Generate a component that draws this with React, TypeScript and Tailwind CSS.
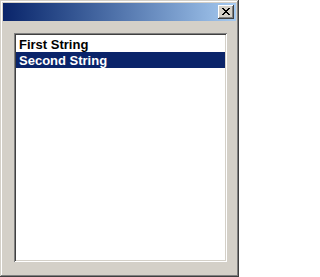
import React from 'react';

const items = ['First String', 'Second String'];

const App: React.FC = () => {
  const selected = 1;

  return (
    <div
      className="w-[239px] h-[277px] bg-[#d4d0c8] p-[3px] flex flex-col shadow-[inset_-1px_-1px_#404040,inset_1px_1px_#d4d0c8,inset_-2px_-2px_#808080,inset_2px_2px_#ffffff]"
      style={{ fontFamily: '"Liberation Sans", Arial, sans-serif' }}
    >
      {/* title bar */}
      <div className="h-[18px] flex items-center justify-end pr-[2px] bg-gradient-to-r from-[#0a246a] to-[#a6caf0]">
        <button className="w-[16px] h-[14px] bg-[#d4d0c8] flex items-center justify-center shadow-[inset_-1px_-1px_#404040,inset_1px_1px_#ffffff,inset_-2px_-2px_#808080,inset_2px_2px_#d4d0c8]">
          <svg width="8" height="7" viewBox="0 0 8 7" shapeRendering="crispEdges" className="-mt-[1px]">
            <path
              d="M0 0h2v1h-2zM6 0h2v1h-2zM1 1h2v1h-2zM5 1h2v1h-2zM2 2h4v1h-4zM3 3h2v1h-2zM2 4h4v1h-4zM1 5h2v1h-2zM5 5h2v1h-2zM0 6h2v1h-2zM6 6h2v1h-2z"
              fill="#000"
            />
          </svg>
        </button>
      </div>

      {/* list box */}
      <div className="mt-[12px] ml-[11px] w-[213px] h-[229px] bg-white p-[2px] shadow-[inset_1px_1px_#808080,inset_-1px_-1px_#ffffff,inset_2px_2px_#404040,inset_-2px_-2px_#d4d0c8]">
        <div className="pt-[1px]">
          {items.map((item, i) => (
            <div
              key={item}
              className={`h-[16px] pl-[3px] flex items-center text-[13px] font-bold leading-none ${
                i === selected ? 'bg-[#0a246a] text-white' : 'text-black'
              }`}
            >
              {item}
            </div>
          ))}
        </div>
      </div>
    </div>
  );
};

export default App;
